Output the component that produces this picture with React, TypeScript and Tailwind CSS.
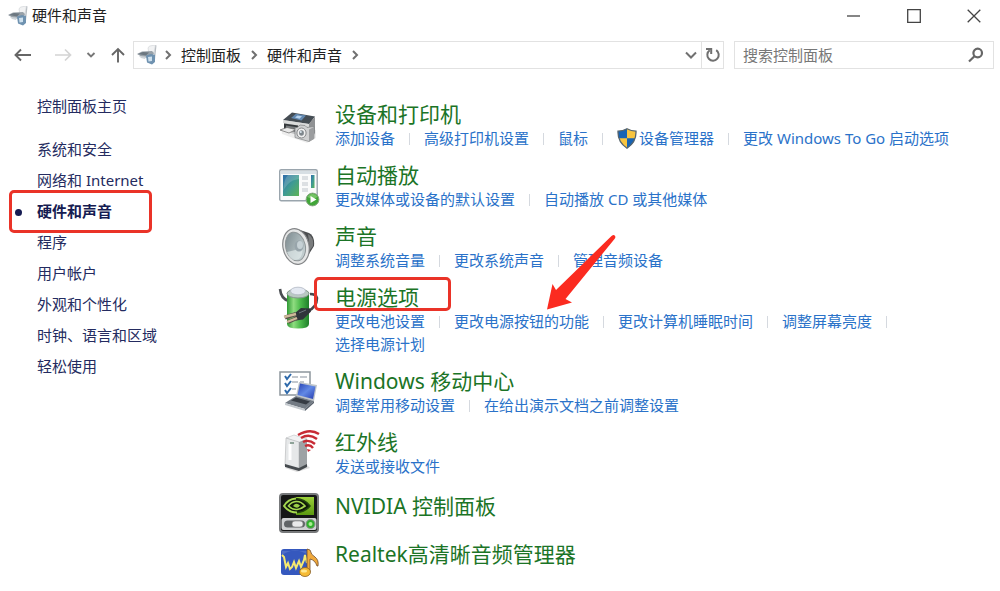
import React from 'react';

interface TaskLink {
  label: string;
  shield?: boolean;
}

interface Category {
  title: string;
  icon: React.ReactNode;
  links: TaskLink[];
  marked?: boolean;
}

const TitleIcon = () => (
  <svg viewBox="0 0 20 20" className="size-5 shrink-0" aria-hidden="true">
    <path d="M11 3l1.500-2 6-1L17 7l-5 2z" fill="#f1f2f3" stroke="#cfd2d5" strokeWidth=".6" />
    <path d="M18.500 0l1 .5-1.500 14-2 2z" fill="#b8bdc2" />
    <path d="M0 9l5-2.500 10-.5 2 2-2 5-9-.5z" fill="#98a1a8" />
    <path d="M1 9l5-2 6 .5-3 3z" fill="#6c7780" />
    <path d="M2 11l7 .5-1 2.500-4-1z" fill="#cdd3d8" />
    <path d="M9 10.500l5-1.500 4 1v7l-3 2.500-5-2z" fill="#6f92b0" />
    <path d="M11 12l4-.5v4.500l-3.500 .5z" fill="#cfe1ee" />
  </svg>
);

const PrinterIcon = () => (
  <svg viewBox="0 0 40 40" className="size-10" aria-hidden="true">
    <path d="M2 24l12-5 23 6v8l-9 5-25-9z" fill="#888" opacity=".15" />
    <path d="M5 15l9-5 22 5v14l-7 4L5 26z" fill="#bfc0c1" />
    <path d="M4 15L13 7.500 36 11.500 30 19z" fill="#454d54" />
    <path d="M12 13l5-4.200 10 1.700-4.500 5z" fill="#6288b0" />
    <path d="M16 12.500l2.500-2 4.500 .7-2.500 2.500z" fill="#b7d3ee" />
    <path d="M4 15l26 4v3L4 18z" fill="#dadbdb" />
    <path d="M30 19l6-7.500V28l-6 4z" fill="#909294" />
    <path d="M5 18.500l14 2v6.500L5 25z" fill="#34383b" />
    <path d="M7 20.500l10 1.500v2L7 22.500z" fill="#777b7e" />
    <path d="M1 25l7-2.500 9 2L10 28z" fill="#e9e9e9" stroke="#777" strokeWidth=".8" />
    <path d="M16 23l3-1 2-2 5 .5 2 2 7-1v12l-5 3-14-4z" fill="#cfd0d1" stroke="#808284" strokeWidth=".7" />
    <path d="M30 24.500l5-2.500v11.500L30 36.500z" fill="#9b9d9f" />
    <ellipse cx="22.500" cy="28" rx="4.600" ry="5" fill="#efefef" stroke="#858789" />
    <ellipse cx="22.500" cy="28" rx="2.400" ry="2.800" fill="#7e868c" />
    <circle cx="21.800" cy="27" r="1" fill="#dce9f2" />
  </svg>
);

const AutoplayIcon = () => (
  <svg viewBox="0 0 40 40" className="size-10 overflow-visible" aria-hidden="true">
    <defs>
      <linearGradient id="ap" x1="0" y1="0" x2="1" y2="1">
        <stop offset="0" stopColor="#2f6cab" />
        <stop offset=".5" stopColor="#3f9b93" />
        <stop offset="1" stopColor="#5cb354" />
      </linearGradient>
    </defs>
    <rect x=".7" y="3.700" width="37.500" height="31" rx="1.500" fill="#fafbfb" stroke="#9aa5ad" strokeWidth="1.400" />
    <path d="M2 5h35v3H2z" fill="#d7dfe4" />
    <rect x="4" y="9" width="16" height="21" fill="url(#ap)" />
    <path d="M4 25c6-10 10-11 16-12v-4H9C5 13 5 20 4 25z" fill="#fff" opacity=".17" />
    <path d="M23 10h6v4h-6zM23 16h6v4h-6zM23 22h6v4h-6z" fill="#dce0e3" />
    <rect x="32" y="9" width="3.500" height="13" fill="url(#ap)" />
    <circle cx="33.500" cy="33.500" r="6.400" fill="#41a638" stroke="#86a883" />
    <path d="M28.500 31a5.500 5 0 0 1 10 0q-5 3-10 0z" fill="#91d27e" opacity=".65" />
    <path d="M31.500 30l6 3.500-6 3.500z" fill="#fff" />
  </svg>
);

const SpeakerIcon = () => (
  <svg viewBox="0 0 40 40" className="size-10" aria-hidden="true">
    <defs>
      <linearGradient id="sp" x1="0" y1="0" x2="1" y2="1">
        <stop offset="0" stopColor="#78868b" />
        <stop offset="1" stopColor="#d3dedf" />
      </linearGradient>
    </defs>
    <path d="M18 2l12 4q6 3 5 13l-5 8-12 10z" fill="#4c4e50" />
    <path d="M29 7q6 3 5 12l-3 4z" fill="#7a7c7d" />
    <ellipse cx="17" cy="19.500" rx="13" ry="18" transform="rotate(-12 17 19.500)" fill="#e5e6e6" stroke="#858789" strokeWidth="1.200" />
    <ellipse cx="16.500" cy="19.500" rx="9.800" ry="14.500" transform="rotate(-12 16.500 19.500)" fill="url(#sp)" stroke="#8d9496" />
    <path d="M8 25q8-1 15-5 2 7-3 12-8 4-12-7z" fill="#e5eeee" opacity=".65" />
    <ellipse cx="20" cy="19" rx="4.500" ry="5.500" fill="#98a5ab" />
    <ellipse cx="21" cy="18" rx="3" ry="4" fill="#c6d1d5" />
  </svg>
);

const PowerIcon = () => (
  <svg viewBox="0 0 40 40" className="size-10 overflow-visible" aria-hidden="true">
    <defs>
      <linearGradient id="pw" x1="0" x2="1">
        <stop offset="0" stopColor="#2f9a35" />
        <stop offset=".3" stopColor="#8fdc80" />
        <stop offset=".6" stopColor="#4dbb4c" />
        <stop offset="1" stopColor="#1f7f2a" />
      </linearGradient>
    </defs>
    <path d="M1 1q1 10 9 12" fill="none" stroke="#4b4e53" strokeWidth="2.600" />
    <path d="M8 5v31q0 4.500 11 4.500T30 36V5z" fill="url(#pw)" />
    <ellipse cx="19" cy="5.500" rx="11" ry="4.500" fill="#b9c9c2" stroke="#82968c" />
    <ellipse cx="19" cy="3" rx="7.500" ry="3.800" fill="#e3e8f1" stroke="#b1b8c3" strokeWidth=".8" />
    <path d="M31 6q6 0 7 4 0 9-9 13" fill="none" stroke="#45484d" strokeWidth="2.600" />
    <path d="M16 25l6-5 9 .5 1 3-8 8-7 1z" fill="#30353b" />
    <path d="M20 25l7-3" stroke="#6d767e" />
    <path d="M17 26L6 29.500M18 30L9 34" stroke="#58504a" strokeWidth="4" />
    <path d="M17 26L5 29M18 30L8 34" stroke="#cdb89a" strokeWidth="2.400" />
  </svg>
);

const MobilityIcon = () => (
  <svg viewBox="0 0 40 40" className="size-10 overflow-visible" aria-hidden="true">
    <defs>
      <linearGradient id="mb" x1="0" y1="0" x2="1" y2="1">
        <stop offset="0" stopColor="#2742b4" />
        <stop offset=".5" stopColor="#6289e5" />
        <stop offset="1" stopColor="#253bb0" />
      </linearGradient>
    </defs>
    <path d="M1 0h30v23H1z" fill="#fff" stroke="#8d969d" strokeWidth="1.500" />
    <path d="M13 5h6m2 0h7M13 10h6m2 0h4M13 17h4" stroke="#b0b7be" strokeWidth="1.500" />
    <path d="M6 4l2 3 4-5M6 11l2 3 4-5M6 18l2 3 4-5" fill="none" stroke="#2f6aab" strokeWidth="2" />
    <path d="M20 10l18 3-3 16-18-5z" fill="#bec4ca" />
    <path d="M21 11.500l15.500 3L34 27l-15.500-4z" fill="url(#mb)" />
    <path d="M17 24l18 5-9 8-20-6z" fill="#737b84" />
    <path d="M17 25.500l14 4-4 3-15-4z" fill="#363c44" />
    <path d="M6 31l20 6v2L6 33z" fill="#c5cacf" />
    <path d="M26 37l9-8v2l-9 8z" fill="#5a626c" />
  </svg>
);

const InfraredIcon = () => (
  <svg viewBox="0 0 40 40" className="size-10 overflow-visible" aria-hidden="true">
    <path d="M6 35l12 4 13-4-4-4z" fill="#777" opacity=".25" />
    <path d="M7 5l8-3 13 4-8 4z" fill="#f1f2f3" stroke="#bfc2c4" strokeWidth=".6" />
    <path d="M7 5l13 4v28L6 33z" fill="#e6e8e9" stroke="#b1b4b6" strokeWidth=".6" />
    <path d="M20 9l8-3v27l-8 4z" fill="#9ea2a5" />
    <path d="M6 31l14 4 8-4v3l-8 4-14-4z" fill="#454a4e" />
    <path d="M11 11v16" stroke="#fff" strokeWidth="3" />
    <path d="M11 9h4v2h-4z" fill="#8ea398" />
    <g fill="none" stroke="#c72b35" strokeWidth="2.400">
      <path d="M19 2Q31-5 40 1" />
      <path d="M22 5q8-5 16 1" />
      <path d="M24 9q6-3 12 2" />
      <path d="M26 13q5-2 8 2" />
    </g>
    <path d="M28 16l4 1-3 2z" fill="#c72b35" />
  </svg>
);

const NvidiaIcon = () => (
  <svg viewBox="0 0 40 40" className="size-10" aria-hidden="true">
    <defs>
      <linearGradient id="nv" x1="0" y1="0" x2="0" y2="1">
        <stop offset="0" stopColor="#9bd03a" />
        <stop offset="1" stopColor="#5c9a10" />
      </linearGradient>
    </defs>
    <rect x="1" y="1" width="38" height="38" rx="3" fill="#151616" stroke="#77797b" strokeWidth="2" />
    <path d="M17 4h18v18H17z" fill="url(#nv)" />
    <path d="M5 13Q10 5 17 5.500 26 6 31 13 26 19 18 19.500 9 19 5 13z" fill="#10190a" />
    <path d="M17 5.500Q9 6 5 13q5 6.500 13 6.500" fill="none" stroke="#a5d84f" strokeWidth="2" />
    <path d="M17 5.500Q26 6 31 13q-5 6-13 6.500" fill="none" stroke="#22430b" strokeWidth="1.500" />
    <path d="M26 13q-4-5-9-4.500-5 .5-7.500 4.500 4 4 8.500 3.500 4-.5 8-3.500z" fill="none" stroke="#a5d84f" strokeWidth="1.600" />
    <path d="M14 13q3-4 7-.5-2 4-7 .5z" fill="#9ccf47" />
    <rect x="2.500" y="25" width="35" height="12" rx="2" fill="#cfd1d2" />
    <rect x="5" y="27.500" width="21" height="7" rx="3.500" fill="#606466" />
    <rect x="13" y="28" width="11" height="6" rx="3" fill="#e9eaea" stroke="#888" strokeWidth=".6" />
    <circle cx="31.500" cy="31" r="4.500" fill="#2fae2b" stroke="#8c8f8c" />
    <circle cx="31.500" cy="31" r="2" fill="#a9ee92" />
  </svg>
);

const RealtekIcon = () => (
  <svg viewBox="0 0 40 40" className="size-10" aria-hidden="true">
    <rect x="2" y="8" width="28" height="26" rx="3" fill="#3558be" />
    <path d="M3 14q13-9 26 0v-4H3z" fill="#7892d5" opacity=".4" />
    <path d="M3 14l2 2 2 10 2-4 2 6 2-2 2-5 2 6 3-7 2 6 3-7 1-5 2 8" fill="none" stroke="#f6e96f" strokeWidth="2" />
    <path d="M28 8l3 1q1 5 5 7 4 3 3 9h-1q-2-6-7-7v13h-3z" fill="#f0a93c" stroke="#6d4b2c" strokeWidth=".8" />
    <ellipse cx="26" cy="31" rx="5.500" ry="4.500" fill="#f6bb35" stroke="#8b622a" strokeWidth=".8" />
    <ellipse cx="25" cy="30" rx="3" ry="1.500" fill="#ffe890" />
  </svg>
);

const ShieldIcon = () => (
  <svg viewBox="0 0 20 21" className="mr-0.5 h-[21px] w-5" aria-hidden="true">
    <path d="M10 .8Q14 3 19 3.200 19.500 14 10 20.200 .5 14 1 3.200 6 3 10 .8z" fill="#f8c43f" />
    <path d="M10 .8Q6 3 1 3.200q0 4 .8 7H10zM10 10.200h8.200Q16.500 16 10 20.200z" fill="#1763b4" />
    <path d="M10 .8Q14 3 19 3.200 19.500 14 10 20.200 .5 14 1 3.200 6 3 10 .8z" fill="none" stroke="#56646e" strokeWidth="1.300" />
  </svg>
);

const Chevron = ({ down }: { down?: boolean }) => (
  <svg viewBox="0 0 12 12" className="size-3 shrink-0" fill="none" stroke="#707070" strokeWidth="2" aria-hidden="true">
    {down ? <path d="M1 3.500l5 5 5-5" /> : <path d="M4 2l4 4-4 4" />}
  </svg>
);

const sidebar = ['系统和安全', '网络和 Internet', '硬件和声音', '程序', '用户帐户', '外观和个性化', '时钟、语言和区域', '轻松使用'];

const categories: Category[] = [
  {
    title: '设备和打印机',
    icon: <PrinterIcon />,
    links: [
      { label: '添加设备' },
      { label: '高级打印机设置' },
      { label: '鼠标' },
      { label: '设备管理器', shield: true },
      { label: '更改 Windows To Go 启动选项' },
    ],
  },
  {
    title: '自动播放',
    icon: <AutoplayIcon />,
    links: [{ label: '更改媒体或设备的默认设置' }, { label: '自动播放 CD 或其他媒体' }],
  },
  {
    title: '声音',
    icon: <SpeakerIcon />,
    links: [{ label: '调整系统音量' }, { label: '更改系统声音' }, { label: '管理音频设备' }],
  },
  {
    title: '电源选项',
    icon: <PowerIcon />,
    marked: true,
    links: [
      { label: '更改电池设置' },
      { label: '更改电源按钮的功能' },
      { label: '更改计算机睡眠时间' },
      { label: '调整屏幕亮度' },
      { label: '选择电源计划' },
    ],
  },
  {
    title: 'Windows 移动中心',
    icon: <MobilityIcon />,
    links: [{ label: '调整常用移动设置' }, { label: '在给出演示文档之前调整设置' }],
  },
  { title: '红外线', icon: <InfraredIcon />, links: [{ label: '发送或接收文件' }] },
];

const panels: Category[] = [
  { title: 'NVIDIA 控制面板', icon: <NvidiaIcon />, links: [] },
  { title: 'Realtek高清晰音频管理器', icon: <RealtekIcon />, links: [] },
];

const Arrow = () => (
  <svg viewBox="0 0 70 76" className="pointer-events-none absolute bottom-full left-[93px] h-[76px] w-[70px]" aria-hidden="true">
    <path d="M0 75.500L5.500 50l3.500 6L64.500 2q2.500-2 3.500 0 1 1-.5 3L18.500 65l6.500 3.500z" fill="#fb2b20" />
  </svg>
);

const CategoryRow = ({ item }: { item: Category }) => (
  <li className="flex items-start">
    <span className={item.links.length ? 'mt-1 shrink-0' : 'shrink-0'}>{item.icon}</span>
    <div className="ml-4 min-w-0 flex-1">
      <h2 className="text-[21px] leading-[26px] text-[#1b7426]">
        <a href="#" className="relative hover:underline">
          {item.title}
          {item.marked && (
            <span className="absolute -top-1.5 -right-8 bottom-0 -left-[21px] rounded-[5px] border-3 border-[#ea3328]" />
          )}
        </a>
      </h2>
      {item.links.length > 0 && (
        <ul className="flex flex-wrap text-[15px] leading-[23px] text-[#2a72c9]">
          {item.links.map((link, i) => (
            <li key={link.label} className="relative flex items-center whitespace-nowrap">
              <a href="#" className="flex items-center hover:underline">
                {link.shield && <ShieldIcon />}
                {link.label}
              </a>
              {i < item.links.length - 1 && <span className="mx-[14px] h-3 w-px bg-[#d5d9df]" />}
              {item.marked && i === 1 && <Arrow />}
            </li>
          ))}
        </ul>
      )}
    </div>
  </li>
);

export default function App() {
  return (
    <div lang="zh-CN" className="min-h-screen bg-white pb-3 font-['Noto_Sans','Noto_Sans_CJK_SC',sans-serif] text-[15px]">
      <header>
        <div className="flex h-[31px] items-center justify-between pr-0.5 pl-2">
          <h1 className="flex items-center gap-1 text-[#222]">
            <TitleIcon />
            硬件和声音
          </h1>
          <div className="flex gap-3">
            <button aria-label="最小化" className="flex h-[31px] w-12 items-center justify-center">
              <svg viewBox="0 0 14 14" className="size-3.5" stroke="#444" strokeWidth="1.300"><path d="M0 7h13" /></svg>
            </button>
            <button aria-label="最大化" className="flex h-[31px] w-12 items-center justify-center">
              <svg viewBox="0 0 14 14" className="size-3.5" fill="none" stroke="#444" strokeWidth="1.300"><path d="M.7.7h12.600v12.600H.7z" /></svg>
            </button>
            <button aria-label="关闭" className="flex h-[31px] w-12 items-center justify-center">
              <svg viewBox="0 0 14 14" className="size-3.5" fill="none" stroke="#444" strokeWidth="1.300"><path d="M.7.7l12.600 12.600M13.300.7L.7 13.300" /></svg>
            </button>
          </div>
        </div>

        <div className="mt-[10px] flex h-7 items-center pr-1.5 pl-[3px]">
          <button aria-label="后退" className="flex w-10 justify-center">
            <svg viewBox="0 0 18 14" className="h-3.5 w-[18px]" fill="none" stroke="#666" strokeWidth="1.900"><path d="M7 1.500L1.500 7 7 12.500M1.500 7H17" /></svg>
          </button>
          <button aria-label="前进" className="flex w-10 justify-center">
            <svg viewBox="0 0 18 14" className="h-3.5 w-[18px]" fill="none" stroke="#d4d4d4" strokeWidth="1.700"><path d="M11 1.500L16.500 7 11 12.500M16.500 7H1" /></svg>
          </button>
          <button aria-label="最近浏览的位置" className="flex w-4 justify-center">
            <svg viewBox="0 0 10 10" className="size-2.5" fill="none" stroke="#777" strokeWidth="1.900"><path d="M1.500 3L5 6.500 8.500 3" /></svg>
          </button>
          <button aria-label="上移" className="flex w-[34px] justify-center pl-1">
            <svg viewBox="0 0 16 16" className="size-4" fill="none" stroke="#666" strokeWidth="1.900"><path d="M2 8l6-6 6 6M8 2v13.500" /></svg>
          </button>
          <nav aria-label="地址" className="flex h-7 min-w-0 flex-1 items-center border border-[#e2e2e2] pl-[3px] text-[#222]">
            <TitleIcon />
            <ol className="ml-[5px] flex items-center whitespace-nowrap">
              <li className="flex items-center gap-[7px]"><Chevron /><a href="#">控制面板</a></li>
              <li className="ml-[7px] flex items-center gap-[7px]"><Chevron /><a href="#">硬件和声音</a><Chevron /></li>
            </ol>
            <button aria-label="以前的位置" className="mr-1 ml-auto"><Chevron down /></button>
            <button aria-label="刷新" className="flex h-full w-[22px] items-center justify-center border-l border-[#e2e2e2]">
              <svg viewBox="0 0 16 16" className="size-4" fill="none" stroke="#707070" strokeWidth="2">
                <path d="M11.200 3.200a5.700 5.700 0 1 1-6.500 .1" />
                <path d="M1 2h5.200v5" />
              </svg>
            </button>
          </nav>
          <div className="relative ml-[10px] w-[260px]">
            <input
              type="search"
              aria-label="搜索控制面板"
              placeholder="搜索控制面板"
              className="h-7 w-full border border-[#e2e2e2] pr-8 pl-2 placeholder:text-[#777] focus:outline-none"
            />
            <svg viewBox="0 0 16 16" className="absolute top-1.5 right-2.5 size-4" fill="none" stroke="#666" strokeWidth="2.200" aria-hidden="true">
              <circle cx="9.700" cy="6" r="4.300" />
              <path d="M6.700 9L1 14.500" />
            </svg>
          </div>
        </div>
      </header>

      <div className="flex pt-[22px]">
        <aside className="w-[279px] shrink-0 pl-[37px] leading-[31px] text-[#242b60]">
          <a href="#">控制面板主页</a>
          <ul className="mt-3">
            {sidebar.map((label) => (
              <li key={label}>
                {label === '硬件和声音' ? (
                  <a href="#" aria-current="page" className="relative inline-block font-bold text-[#161c52]">
                    {label}
                    <span className="absolute top-[13px] -left-[22px] size-[7px] rounded-full bg-[#161c52]" />
                    <span className="absolute -inset-y-1.5 -right-10 -left-7 rounded-[5px] border-3 border-[#ea3328]" />
                  </a>
                ) : (
                  <a href="#">{label}</a>
                )}
              </li>
            ))}
          </ul>
        </aside>

        <main className="min-w-0 flex-1 pt-[10px] pr-5">
          <ul className="flex flex-col gap-3">
            {categories.map((item) => <CategoryRow key={item.title} item={item} />)}
          </ul>
          <ul className="mt-[15px] flex flex-col gap-2">
            {panels.map((item) => <CategoryRow key={item.title} item={item} />)}
          </ul>
        </main>
      </div>
    </div>
  );
}
